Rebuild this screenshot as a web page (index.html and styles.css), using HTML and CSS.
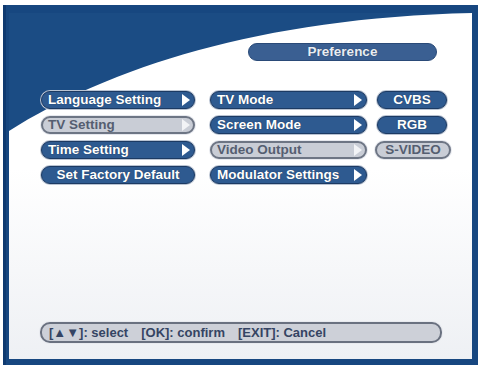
FILE: index.html
```html
<!DOCTYPE html>
<html>
<head>
<meta charset="utf-8">
<link rel="stylesheet" href="styles.css">
</head>
<body>
<div class="screen">
  <div class="inner">
    <svg class="swoosh" width="463" height="346" viewBox="0 0 463 346" aria-hidden="true">
      <path d="M0,0 L463,0 L463,0 C250,5 100,55 0,118 Z" fill="#1b4c84"/>
    </svg>
    <div class="title">Preference</div>
    <div class="menu">
      <div class="btn arrow"><span>Language Setting</span><i class="tri"></i></div>
      <div class="btn arrow"><span>TV Mode</span><i class="tri"></i></div>
      <div class="btn center right-col"><span>CVBS</span></div>

      <div class="btn arrow sel"><span>TV Setting</span><i class="tri"></i></div>
      <div class="btn arrow"><span>Screen Mode</span><i class="tri"></i></div>
      <div class="btn center right-col"><span>RGB</span></div>

      <div class="btn arrow"><span>Time Setting</span><i class="tri"></i></div>
      <div class="btn arrow sel"><span>Video Output</span><i class="tri"></i></div>
      <div class="btn center sel right-col wide"><span>S-VIDEO</span></div>

      <div class="btn center"><span>Set Factory Default</span></div>
      <div class="btn arrow"><span>Modulator Settings</span><i class="tri"></i></div>
      <div class="empty"></div>
    </div>
    <div class="help">
      <span>[&#9650;&#9660;]: select</span>
      <span>[OK]: confirm</span>
      <span>[EXIT]: Cancel</span>
    </div>
  </div>
</div>
</body>
</html>
```
FILE: styles.css
```css
html, body {
  margin: 0;
  padding: 0;
  background: #ffffff;
}
body {
  width: 481px;
  height: 365px;
  overflow: hidden;
  font-family: "Liberation Sans", Arial, sans-serif;
  font-weight: bold;
}
.screen {
  margin: 5px 0 0 3px;
  width: 475px;
  height: 360px;
  box-sizing: border-box;
  background: #174780;
  border-left: 3px solid #0f3a70;
  padding: 8px 5px 0 3px;
}
.inner {
  position: relative;
  width: 463px;
  height: 346px;
  background: linear-gradient(#ffffff 0%, #ffffff 45%, #eef0f4 100%);
  display: flex;
  flex-direction: column;
}
.swoosh {
  position: absolute;
  left: 0;
  top: 0;
}
.title {
  position: relative;
  margin: 30px 0 0 239px;
  width: 189px;
  height: 18px;
  box-sizing: border-box;
  background: #3a5f92;
  border: 1px solid #2a4a78;
  border-radius: 9px;
  color: #e9edf3;
  font-size: 13.5px;
  line-height: 16px;
  text-align: center;
  text-shadow: 0 0 1px #1c3558;
}
.menu {
  position: relative;
  margin: 30px 0 0 32px;
  display: grid;
  grid-template-columns: 154px 157px 70px;
  grid-auto-rows: 18px;
  column-gap: 15px;
  row-gap: 7px;
}
.right-col {
  width: 70px;
  margin-left: -5px;
}
.right-col.wide {
  width: 76px;
  margin-left: -7px;
}
.btn {
  box-sizing: border-box;
  height: 18px;
  background: #2e5a90;
  border: 1px solid #1c3a63;
  box-shadow: 0 0 0 1px #b9c3d2;
  border-radius: 9px;
  color: #ffffff;
  font-size: 13.5px;
  line-height: 16px;
  display: flex;
  align-items: center;
  padding: 0 2px 0 6px;
  text-shadow: 0 0 1px #16304f;
  white-space: nowrap;
}
.btn.arrow {
  justify-content: space-between;
}
.btn.center {
  justify-content: center;
  padding: 0;
}
.btn.sel {
  background: #c9cdd6;
  border: 2px solid #6d7584;
  box-shadow: 0 0 0 1px #e6e8ee;
  color: #555e71;
  text-shadow: none;
  padding-left: 5px;
  padding-right: 1px;
}
.btn.center.sel {
  padding: 0;
}
.tri {
  display: block;
  width: 0;
  height: 0;
  border-top: 6px solid transparent;
  border-bottom: 6px solid transparent;
  border-left: 8px solid #ffffff;
  margin-right: 2px;
}
.sel .tri {
  border-left-color: #f2f3f6;
}
.help {
  position: relative;
  margin: auto 0 16px 31px;
  width: 402px;
  height: 21px;
  box-sizing: border-box;
  background: #cdd0d8;
  border: 2px solid #6a7180;
  box-shadow: 0 0 0 1px #e8eaef;
  border-radius: 10px;
  color: #354463;
  font-size: 13px;
  line-height: 17px;
  padding-left: 7px;
  display: flex;
  gap: 13px;
  white-space: nowrap;
}
```
